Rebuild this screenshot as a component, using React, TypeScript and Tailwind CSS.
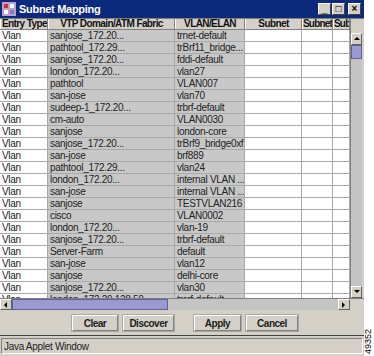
import React from "react";

const ROWS: [string, string][] = [
  ["sanjose_172.20...", "trnet-default"],
  ["pathtool_172.29...", "trBrf11_bridge..."],
  ["sanjose_172.20...", "fddi-default"],
  ["london_172.20...", "vlan27"],
  ["pathtool", "VLAN007"],
  ["san-jose", "vlan70"],
  ["sudeep-1_172.20...", "trbrf-default"],
  ["cm-auto", "VLAN0030"],
  ["sanjose", "london-core"],
  ["sanjose_172.20...", "trBrf9_bridge0xf"],
  ["san-jose", "brf889"],
  ["pathtool_172.29...", "vlan24"],
  ["london_172.20...", "internal VLAN ..."],
  ["san-jose", "internal VLAN ..."],
  ["sanjose", "TESTVLAN216"],
  ["cisco", "VLAN0002"],
  ["london_172.20...", "vlan-19"],
  ["sanjose_172.20...", "trbrf-default"],
  ["Server-Farm", "default"],
  ["san-jose", "vlan12"],
  ["sanjose", "delhi-core"],
  ["sanjose_172.20...", "vlan30"],
  ["london_172.20.128.50", "trcrf-default"],
];

const COLS = "grid grid-cols-[48px_127px_70px_57px_31px_17px]";

function Arrow({ dir }: { dir: "up" | "down" | "left" | "right" }) {
  const pts = {
    up: "1,5 4,2 7,5",
    down: "1,2 4,5 7,2",
    left: "5,1 2,4 5,7",
    right: "2,1 5,4 2,7",
  }[dir];
  return (
    <svg width="8" height="8" viewBox="0 0 8 8">
      <polygon points={pts} fill="#000" />
    </svg>
  );
}

function Button({ label, w }: { label: string; w: string }) {
  return (
    <div
      className={`${w} h-[16px] flex items-center justify-center border border-t-white border-l-white border-r-[#808080] border-b-[#808080] outline outline-1 outline-[#a8a8a8] text-[10px] font-bold tracking-[-0.5px] text-[#222]`}
    >
      {label}
    </div>
  );
}

export default function App() {
  return (
    <div
      className="w-[374px] h-[356px] bg-white relative overflow-hidden"
      style={{ fontFamily: '"Liberation Sans", Arial, sans-serif' }}
    >
      <div className="w-[364px] h-[356px] flex flex-col bg-[#d4d0c8]">
        {/* title bar */}
        <div className="h-[18px] bg-[#0c2a7c] flex items-center pl-[2px] pr-[3px]">
          <svg width="14" height="14" viewBox="0 0 14 14" className="mr-[3px]">
            <rect x="0" y="0" width="14" height="14" fill="#c0a0c8" />
            <rect x="2" y="2" width="4" height="4" fill="#d03030" />
            <rect x="8" y="2" width="4" height="4" fill="#fff" />
            <rect x="2" y="8" width="4" height="4" fill="#fff" />
            <rect x="8" y="8" width="4" height="4" fill="#8080c0" />
          </svg>
          <span className="text-white font-bold text-[11px] tracking-[-0.3px] leading-none">Subnet Mapping</span>
          <div className="ml-auto flex gap-[1px]">
            {["_", "□", "×"].map((c, i) => (
              <div
                key={i}
                className={`w-[13px] h-[12px] bg-[#d4d0c8] border border-t-white border-l-white border-r-[#404040] border-b-[#404040] flex items-center justify-center text-[10px] font-bold leading-none text-black ${i === 2 ? "ml-[2px]" : ""}`}
              >
                {c}
              </div>
            ))}
          </div>
        </div>

        {/* table area */}
        <div className="flex h-[280px] border-t border-[#808080]">
          <div className="flex flex-col w-[350px] bg-white overflow-hidden">
            <div className={`${COLS} h-[14px] bg-[#d4d0c8] text-[10px] font-bold tracking-[-0.6px] text-[#111] border-b border-[#808080]`}>
              {["Entry Type", "VTP Domain/ATM Fabric", "VLAN/ELAN", "Subnet", "Subnet", "Sub"].map((h, i) => (
                <div
                  key={i}
                  className={`border-r border-[#808080] border-l border-l-white flex items-center whitespace-nowrap overflow-hidden leading-none ${i === 0 ? "justify-start pl-[1px]" : i >= 4 ? "justify-start tracking-[-0.8px]" : "justify-center"}`}
                >
                  {h}
                </div>
              ))}
            </div>
            {ROWS.map(([d, v], i) => (
              <div key={i} className={`${COLS} h-[12px] shrink-0 text-[10px] tracking-[-0.3px] leading-none text-[#222]`}>
                <div className="bg-white border-r border-b border-[#a8a8a8] pl-[2px] flex items-center">Vlan</div>
                <div className="bg-[#c8c8c8] border-r border-b border-[#a8a8a8] pl-[2px] flex items-center whitespace-nowrap overflow-hidden">{d}</div>
                <div className="bg-[#c8c8c8] border-r border-b border-[#a8a8a8] pl-[2px] flex items-center whitespace-nowrap overflow-hidden">{v}</div>
                <div className="bg-white border-r border-b border-[#a8a8a8]" />
                <div className="bg-white border-r border-b border-[#a8a8a8]" />
                <div className="bg-white border-r border-b border-[#a8a8a8]" />
              </div>
            ))}
          </div>
          {/* vertical scrollbar */}
          <div className="w-[12px] flex flex-col bg-[#c4c4c4] border-l border-[#808080]">
            <div className="h-[14px] bg-[#d4d0c8]" />
            <div className="h-[12px] flex items-center justify-center bg-[#d4d0c8] border border-t-white border-l-white border-r-[#606060] border-b-[#606060]">
              <Arrow dir="up" />
            </div>
            <div className="h-[14px] bg-[#9a9ad0] border border-[#6060a0]" />
            <div className="flex-1" />
            <div className="h-[12px] flex items-center justify-center bg-[#d4d0c8] border border-t-white border-l-white border-r-[#606060] border-b-[#606060]">
              <Arrow dir="down" />
            </div>
          </div>
        </div>

        {/* horizontal scrollbar */}
        <div className="flex h-[12px] border-t border-[#808080]">
          <div className="w-[350px] flex bg-[#c4c4c4]">
            <div className="w-[12px] flex items-center justify-center bg-[#d4d0c8] border border-t-white border-l-white border-r-[#606060] border-b-[#606060]">
              <Arrow dir="left" />
            </div>
            <div className="w-[156px] bg-[#9a9ad0] border border-[#6060a0]" />
            <div className="flex-1" />
            <div className="w-[12px] flex items-center justify-center bg-[#d4d0c8] border border-t-white border-l-white border-r-[#606060] border-b-[#606060]">
              <Arrow dir="right" />
            </div>
          </div>
          <div className="w-[14px] bg-[#d4d0c8]" />
        </div>

        {/* buttons */}
        <div className="h-[25px] flex items-center justify-center gap-[5px] mt-[1px] pl-[6px] border-b border-[#404040]">
          <Button label="Clear" w="w-[46px]" />
          <Button label="Discover" w="w-[51px]" />
          <div className="w-[10px]" />
          <Button label="Apply" w="w-[47px]" />
          <Button label="Cancel" w="w-[52px]" />
        </div>

        {/* status bar */}
        <div className="h-[16px] mt-[2px] mx-[1px] border border-t-[#808080] border-l-[#808080] border-r-white border-b-white flex items-center px-[2px] text-[10px] tracking-[-0.3px] text-[#222]">
          Java Applet Window
        </div>
      </div>
      <div className="absolute right-[1px] bottom-[2px] text-[9px] text-black leading-none [writing-mode:vertical-rl] rotate-180">
        49352
      </div>
    </div>
  );
}
